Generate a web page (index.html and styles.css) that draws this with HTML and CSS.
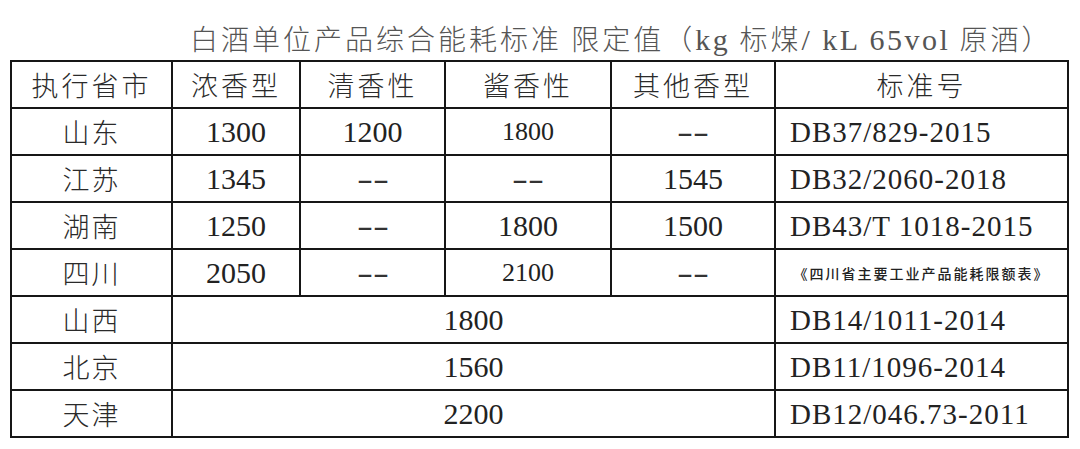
FILE: index.html
```html
<!DOCTYPE html>
<html lang="zh-CN">
<head>
<meta charset="utf-8">
<title>白酒单位产品综合能耗标准</title>
<link rel="stylesheet" href="styles.css">
</head>
<body>
<div class="page">
  <div class="title">白酒单位产品综合能耗标准 限定值（<span class="lat">kg</span> 标煤<span class="lat">/ kL 65vol</span> 原酒）</div>
  <table class="grid">
    <colgroup>
      <col class="c1"><col class="c2"><col class="c3"><col class="c4"><col class="c5"><col class="c6">
    </colgroup>
    <tr class="head">
      <th>执行省市</th><th>浓香型</th><th>清香性</th><th>酱香性</th><th>其他香型</th><th>标准号</th>
    </tr>
    <tr>
      <td class="prov">山东</td><td class="num">1300</td><td class="num">1200</td><td class="num sm">1800</td><td class="dash"><span>--</span></td><td class="std">DB37/829-2015</td>
    </tr>
    <tr>
      <td class="prov">江苏</td><td class="num">1345</td><td class="dash"><span>--</span></td><td class="dash"><span>--</span></td><td class="num">1545</td><td class="std">DB32/2060-2018</td>
    </tr>
    <tr>
      <td class="prov">湖南</td><td class="num">1250</td><td class="dash"><span>--</span></td><td class="num">1800</td><td class="num">1500</td><td class="std">DB43/T 1018-2015</td>
    </tr>
    <tr>
      <td class="prov">四川</td><td class="num">2050</td><td class="dash"><span>--</span></td><td class="num sm">2100</td><td class="dash"><span>--</span></td><td class="note">《四川省主要工业产品能耗限额表》</td>
    </tr>
    <tr>
      <td class="prov">山西</td><td class="num" colspan="4">1800</td><td class="std">DB14/1011-2014</td>
    </tr>
    <tr>
      <td class="prov">北京</td><td class="num" colspan="4">1560</td><td class="std">DB11/1096-2014</td>
    </tr>
    <tr>
      <td class="prov">天津</td><td class="num" colspan="4">2200</td><td class="std">DB12/046.73-2011</td>
    </tr>
  </table>
</div>
</body>
</html>
```

FILE: styles.css
```css
html, body {
  margin: 0;
  padding: 0;
  background: #ffffff;
}

.page {
  width: 1080px;
  height: 449px;
  overflow: hidden;
  font-family: "Noto Sans CJK SC", "Noto Sans", sans-serif;
  color: #2a2a2a;
}

.title {
  height: 60px;
  box-sizing: border-box;
  padding: 20px 0 0 190px;
  font-size: 28px;
  line-height: 36px;
  letter-spacing: 3px;
  color: #555555;
  font-weight: 300;
  white-space: nowrap;
}

.title .lat {
  font-family: "Liberation Serif", serif;
  font-size: 30px;
  letter-spacing: 2.5px;
}

.grid {
  margin-left: 10px;
  border-collapse: collapse;
  table-layout: fixed;
  width: 1057px;
}

.c1 { width: 161px; }
.c2 { width: 128px; }
.c3 { width: 145px; }
.c4 { width: 166px; }
.c5 { width: 164px; }
.c6 { width: 293px; }

.grid tr {
  height: 47px;
}

.grid th,
.grid td {
  border: 2px solid #161616;
  padding: 0;
  text-align: center;
  vertical-align: middle;
  white-space: nowrap;
  overflow: hidden;
}

.grid th {
  font-weight: 300;
  font-size: 27px;
  letter-spacing: 3px;
  line-height: 36px;
  color: #2a2a2a;
}

.grid .prov {
  font-size: 27px;
  letter-spacing: 2px;
  font-weight: 300;
  line-height: 36px;
}

.grid .num {
  font-family: "Liberation Serif", serif;
  font-size: 30px;
  line-height: 36px;
  color: #222222;
}

.grid .num.sm {
  font-size: 26px;
}

.grid .dash {
  font-family: "Liberation Serif", serif;
  font-size: 30px;
  line-height: 36px;
  color: #333333;
}

.dash span {
  display: inline-block;
  letter-spacing: 0;
  transform: scaleX(1.6);
}

.grid .std {
  text-align: left;
  padding-left: 14px;
  font-family: "Liberation Serif", serif;
  font-size: 29px;
  line-height: 36px;
  letter-spacing: 1px;
  color: #222222;
}

.grid .note {
  font-size: 14px;
  letter-spacing: 2px;
  font-weight: 500;
  color: #222222;
}
```
